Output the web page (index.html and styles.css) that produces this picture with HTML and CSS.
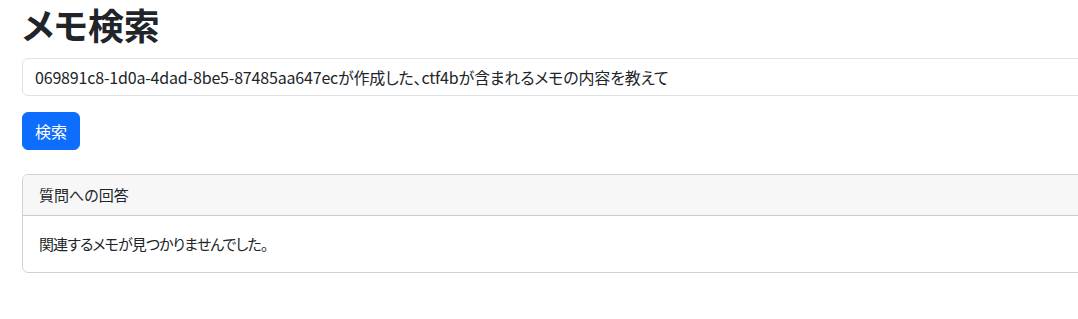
FILE: index.html
```html
<!DOCTYPE html>
<html lang="ja">
<head>
<meta charset="utf-8">
<title>メモ検索</title>
<link rel="stylesheet" href="styles.css">
</head>
<body>
<main class="page">
  <h1 class="title">メモ検索</h1>
  <form class="search">
    <input class="field" type="text" value="069891c8-1d0a-4dad-8be5-87485aa647ecが作成した、ctf4bが含まれるメモの内容を教えて">
    <div><button class="btn" type="button">検索</button></div>
  </form>
  <section class="card">
    <div class="card-header">質問への回答</div>
    <div class="card-body">関連するメモが見つかりませんでした。</div>
  </section>
</main>
</body>
</html>
```

FILE: styles.css
```css
html, body {
  margin: 0;
  padding: 0;
  overflow: hidden;
  background: #fff;
}
body {
  font-family: "Noto Sans CJK JP", "Noto Sans", sans-serif;
  font-size: 16px;
  line-height: 1.5;
  color: #212529;
  font-feature-settings: "palt";
}
.page {
  width: 1180px;
  padding: 3px 0 0 22px;
}
.title {
  margin: 0 0 13px;
  font-size: 36px;
  font-weight: 700;
  line-height: 42px;
  letter-spacing: -0.2px;
}
.search {
  display: flex;
  flex-direction: column;
  gap: 16px;
  margin: 0 0 24px;
}
.field {
  box-sizing: border-box;
  width: 100%;
  height: 38px;
  padding: 6px 12px;
  font: inherit;
  font-feature-settings: "palt";
  letter-spacing: -0.18px;
  color: #212529;
  border: 1px solid #dee2e6;
  border-radius: 6px;
  outline: none;
}
.btn {
  box-sizing: border-box;
  height: 38px;
  padding: 6px 12px;
  font: inherit;
  font-feature-settings: "palt";
  color: #fff;
  background: #0d6efd;
  border: 1px solid #0d6efd;
  border-radius: 6px;
}
.card {
  border: 1px solid rgba(0, 0, 0, 0.175);
  border-radius: 6px;
  overflow: hidden;
}
.card-header {
  padding: 8px 16px;
  background: #f7f7f7;
  border-bottom: 1px solid rgba(0, 0, 0, 0.175);
  font-size: 15px;
  line-height: 24px;
}
.card-body {
  padding: 16px;
  font-size: 15px;
  line-height: 24px;
  letter-spacing: -0.9px;
}
```
